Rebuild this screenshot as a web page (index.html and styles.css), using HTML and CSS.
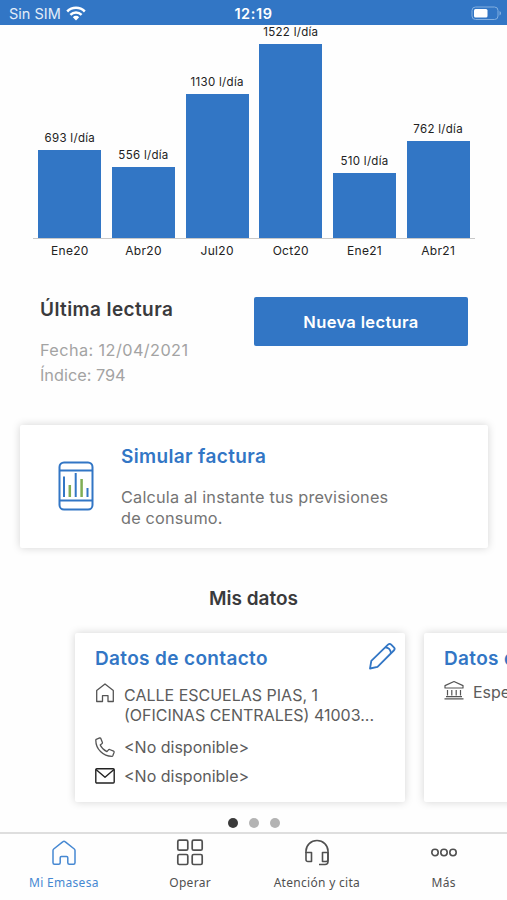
FILE: index.html
```html
<!DOCTYPE html>
<html lang="es">
<head>
    <meta charset="UTF-8">
    <meta name="viewport" content="width=device-width, initial-scale=1.0">
    <title>Mi Emasesa</title>
    <link rel="stylesheet" href="styles.css">
</head>
<body>
    <div class="app">
        <header class="status">
            <div class="carrier">
                <span>Sin SIM</span>
                <svg width="20" height="15" viewBox="0 0 20 15" fill="none" stroke="#fff" stroke-width="2.5">
                    <path d="M1.2 5.5a12.4 12.4 0 0 1 17.6 0"/>
                    <path d="M4.4 8.9a7.9 7.9 0 0 1 11.2 0"/>
                    <path d="M6.8 11.2a4.5 4.5 0 0 1 6.4 0L10 14.4z" fill="#fff" stroke="none"/>
                </svg>
            </div>
            <div class="time">12:19</div>
            <div class="battery">
                <svg width="31" height="15" viewBox="0 0 31 15" fill="none">
                    <rect x="1" y="1" width="26" height="12.5" rx="3.5" stroke="#82afe0"/>
                    <rect x="3" y="3" width="13.5" height="8.5" rx="1.5" fill="#fff"/>
                    <path d="M28.5 5v4.5c2-.8 2-3.7 0-4.5z" fill="#82afe0"/>
                </svg>
            </div>
        </header>

        <main class="content">
            <section class="chart">
                <div class="bars">
                    <div class="col"><span class="value">693 l/día</span><div class="bar" style="height: 88px"></div></div>
                    <div class="col"><span class="value">556 l/día</span><div class="bar" style="height: 71px"></div></div>
                    <div class="col"><span class="value">1130 l/día</span><div class="bar" style="height: 144px"></div></div>
                    <div class="col"><span class="value">1522 l/día</span><div class="bar" style="height: 194px"></div></div>
                    <div class="col"><span class="value">510 l/día</span><div class="bar" style="height: 65px"></div></div>
                    <div class="col"><span class="value">762 l/día</span><div class="bar" style="height: 97px"></div></div>
                </div>
                <div class="months">
                    <span>Ene20</span><span>Abr20</span><span>Jul20</span><span>Oct20</span><span>Ene21</span><span>Abr21</span>
                </div>
            </section>

            <section class="reading">
                <div>
                    <h2 class="reading-title">Última lectura</h2>
                    <p class="reading-text">Fecha: 12/04/2021</p>
                    <p class="reading-text indice">Índice: 794</p>
                </div>
                <button class="btn">Nueva lectura</button>
            </section>

            <section class="simulate">
                <svg width="36" height="50" viewBox="0 0 36 50" fill="none" stroke="#3276c5" stroke-width="2">
                    <rect x="1.5" y="1.5" width="33" height="47" rx="4.5"/>
                    <path d="M1.5 9.5h33M1.5 39.5h33"/>
                    <path d="M6 15.5V36M17.7 12v24M29.5 27v9"/>
                    <path d="M11.8 24v12M23.6 18v18" stroke="#7fad55" stroke-width="2.5"/>
                </svg>
                <div>
                    <h3 class="card-title">Simular factura</h3>
                    <p class="simulate-text">Calcula al instante tus previsiones<br>de consumo.</p>
                </div>
            </section>

            <h2 class="heading">Mis datos</h2>

            <section class="cards">
                <article class="card">
                    <div class="card-head">
                        <h3 class="card-title">Datos de contacto</h3>
                        <svg class="pencil" width="28" height="28" viewBox="0 0 28 28" fill="none" stroke="#3276c5" stroke-width="1.8" stroke-linejoin="round">
                            <path d="M2 26.5l1.3-7.7L20 2.700c1-1 2.300-1 3.200-.1l2.700 2.700c.9.900.9 2.200-.1 3.200L9.500 24.800z"/>
                            <path d="M17.300 5.400c2.800.2 5.200 2.500 5.600 5.600"/>
                        </svg>
                    </div>
                    <div class="row address">
                        <svg width="20" height="20" viewBox="0 0 20 20" fill="none" stroke="#555" stroke-width="1.3" stroke-linejoin="round">
                            <path d="M1.700 7.500L10 1l8.300 6.500v11H13v-5.800H7.500v5.800H1.700z"/>
                        </svg>
                        <p>CALLE ESCUELAS PIAS, 1<br>(OFICINAS CENTRALES) 41003...</p>
                    </div>
                    <div class="row phone">
                        <svg width="20" height="20" viewBox="0 0 20 20" fill="none" stroke="#555" stroke-width="1.3" stroke-linejoin="round">
                            <path d="M1.200 2.300L4.700.9c.5-.1.900.1 1.100.5l1.600 4c.2.400 0 .8-.3 1.100L5.200 8c1.400 3 3.600 5.200 6.700 6.700l1.600-1.900c.3-.3.700-.4 1.100-.3l4 1.600c.4.200.6.600.5 1.100l-1.300 3.500c-.2.500-.5.600-.9.600C8 19.200.8 12 .8 3.200c0-.4.100-.7.400-.9z"/>
                        </svg>
                        <p>&lt;No disponible&gt;</p>
                    </div>
                    <div class="row mail">
                        <svg width="20" height="16" viewBox="0 0 20 16" fill="none" stroke="#222" stroke-width="1.4" stroke-linejoin="round">
                            <rect x=".8" y=".8" width="18.4" height="14.2" rx="1"/>
                            <path d="M1 1.500l9 7.700 9-7.700"/>
                        </svg>
                        <p>&lt;No disponible&gt;</p>
                    </div>
                </article>
                <article class="card">
                    <div class="card-head">
                        <h3 class="card-title">Datos de pago</h3>
                    </div>
                    <div class="row bank">
                        <svg width="20" height="20" viewBox="0 0 20 20" fill="none" stroke="#555" stroke-width="1.2" stroke-linejoin="round">
                            <path d="M1 8V5.600L10 1.500l9 4.100V8z"/>
                            <path d="M3.500 10v5.500M7.800 10v5.500M12.200 10v5.500M16.500 10v5.500M2 16.700h16M.5 18.800h19"/>
                        </svg>
                        <p>Especial</p>
                    </div>
                </article>
            </section>

            <div class="dots"><i class="dot active"></i><i class="dot"></i><i class="dot"></i></div>
        </main>

        <nav class="tabs">
            <a class="tab active">
                <svg width="28" height="28" viewBox="0 0 28 28" fill="none" stroke="currentColor" stroke-width="1.5" stroke-linejoin="round">
                    <path d="M3 11.500c0-.7.200-1.100.700-1.500l9.300-7.400c.6-.5 1.400-.5 2 0l9.300 7.400c.5.400.7.800.7 1.500v12.300c0 1-.5 1.500-1.500 1.500h-4.200c-1 0-1.500-.5-1.500-1.500v-5c0-.8-.4-1.200-1.200-1.200h-5.200c-.8 0-1.200.4-1.200 1.200v5c0 1-.5 1.500-1.500 1.500H4.500c-1 0-1.500-.5-1.500-1.500z"/>
                </svg>
                <span>Mi Emasesa</span>
            </a>
            <a class="tab">
                <svg width="28" height="28" viewBox="0 0 28 28" fill="none" stroke="currentColor" stroke-width="1.7">
                    <rect x="1.8" y="1.2" width="10" height="10" rx="1.5"/>
                    <rect x="16.2" y="1.2" width="10" height="10" rx="1.5"/>
                    <rect x="1.8" y="15.5" width="10" height="10" rx="1.5"/>
                    <rect x="16.2" y="15.5" width="10" height="10" rx="1.5"/>
                </svg>
                <span>Operar</span>
            </a>
            <a class="tab">
                <svg width="28" height="28" viewBox="0 0 28 28" fill="none" stroke="currentColor" stroke-width="1.6" stroke-linejoin="round">
                    <path d="M3 14v-2a11 10.500 0 0 1 22 0v10.500c0 2-1 3-3 3h-6"/>
                    <path d="M3 13.500h5.500v9H5c-1.300 0-2-.7-2-2zM25 13.500h-5.500v9H23c1.300 0 2-.7 2-2z"/>
                </svg>
                <span>Atención y cita</span>
            </a>
            <a class="tab">
                <svg width="28" height="28" viewBox="0 0 28 28" fill="none" stroke="currentColor" stroke-width="1.6">
                    <circle cx="5" cy="13.5" r="3.2"/>
                    <circle cx="14" cy="13.5" r="3.2"/>
                    <circle cx="23" cy="13.5" r="3.2"/>
                </svg>
                <span>Más</span>
            </a>
        </nav>
    </div>
</body>
</html>
```
FILE: styles.css
```css
* {
    margin: 0;
    padding: 0;
    box-sizing: border-box;
}

body {
    font-family: Inter, sans-serif;
    background: #fefefe;
    color: #3a3a3c;
    overflow: hidden;
}

svg {
    display: block;
    flex: none;
}

.app {
    width: 507px;
    height: 900px;
    display: flex;
    flex-direction: column;
    overflow: hidden;
}

.status {
    height: 25px;
    flex: none;
    display: grid;
    grid-template-columns: 1fr auto 1fr;
    align-items: center;
    padding: 2px 5px 0 5px;
    background: #3276c5;
    color: #fff;
    font-size: 14.5px;
}

.carrier {
    display: flex;
    align-items: center;
    gap: 5px;
    padding-left: 4px;
    color: #e2edf8;
}

.time {
    font-weight: 600;
    letter-spacing: 0.6px;
}

.battery {
    justify-self: end;
}

.content {
    flex: 1;
    min-height: 0;
    overflow: hidden;
}

/* Consumption chart */
.chart {
    width: 442px;
    margin-left: 33px;
    font-size: 11.5px;
    color: #222;
}

.bars {
    height: 214px;
    display: grid;
    grid-template-columns: repeat(6, 1fr);
    align-items: end;
    border-bottom: 1px solid #c8c8c8;
}

.col {
    display: flex;
    flex-direction: column;
    align-items: center;
}

.value {
    line-height: 14px;
    margin-bottom: 5px;
    white-space: nowrap;
    letter-spacing: 0.3px;
}

.bar {
    width: 63px;
    background: #3276c5;
}

.months {
    display: grid;
    grid-template-columns: repeat(6, 1fr);
    margin-top: 5px;
    line-height: 14px;
    font-size: 12px;
    letter-spacing: 0.3px;
    text-align: center;
}

/* Last reading */
.reading {
    display: flex;
    justify-content: space-between;
    align-items: flex-start;
    padding: 39px 39px 0 40px;
}

.reading-title {
    font-size: 19px;
    font-weight: 600;
    line-height: 26px;
    letter-spacing: 0.4px;
    margin-bottom: 15px;
}

.reading-text {
    font-size: 16.3px;
    line-height: 25px;
    color: #a3a3a3;
    letter-spacing: 0.4px;
}

.indice {
    letter-spacing: 0;
}

.btn {
    width: 214px;
    height: 49px;
    border: none;
    border-radius: 2px;
    background: #3276c5;
    color: #fff;
    font-family: inherit;
    font-size: 16.5px;
    font-weight: 600;
    letter-spacing: 0.35px;
}

/* Bill simulator */
.simulate {
    display: flex;
    width: 468px;
    height: 123px;
    margin: 37px 0 0 20px;
    padding: 19px 0 0 38px;
    gap: 27px;
    background: #fff;
    border-radius: 2px;
    box-shadow: 0 0 9px rgba(0, 0, 0, 0.17);
}

.simulate svg {
    margin-top: 17px;
}

.card-title {
    font-size: 19px;
    font-weight: 600;
    line-height: 26px;
    color: #3276c5;
    letter-spacing: 0.35px;
    white-space: nowrap;
}

.simulate-text {
    margin-top: 17px;
    font-size: 16.3px;
    line-height: 21px;
    color: #747474;
    letter-spacing: 0.18px;
}

.heading {
    margin-top: 39px;
    font-size: 19px;
    font-weight: 600;
    line-height: 24px;
    text-align: center;
}

/* Contact cards */
.cards {
    display: flex;
    gap: 19px;
    margin: 22px 0 0 75px;
}

.card {
    flex: none;
    width: 330px;
    height: 169px;
    padding: 13px 9px 0 20px;
    background: #fff;
    border-radius: 2px;
    box-shadow: 0 0 9px rgba(0, 0, 0, 0.17);
}

.card-head {
    display: flex;
    justify-content: space-between;
    height: 26px;
}

.pencil {
    margin-top: -4px;
}

.row {
    display: flex;
    gap: 9px;
    font-size: 16px;
    line-height: 20px;
    color: #5c5c5c;
    white-space: nowrap;
}

.address {
    margin-top: 13px;
}

.address svg,
.bank svg {
    margin-top: -2px;
}

.phone {
    margin-top: 12px;
}

.mail {
    margin-top: 9px;
}

.mail svg {
    margin-top: 2px;
}

.bank {
    margin-top: 10px;
}

.dots {
    display: flex;
    justify-content: center;
    gap: 11px;
    margin-top: 16px;
}

.dot {
    width: 10px;
    height: 10px;
    border-radius: 50%;
    background: #b3b3b3;
}

.dot.active {
    background: #3a3a3a;
}

/* Bottom navigation */
.tabs {
    flex: none;
    height: 68px;
    display: grid;
    grid-template-columns: repeat(4, 1fr);
    border-top: 2px solid #dedede;
    background: #fefefe;
}

.tab {
    display: flex;
    flex-direction: column;
    align-items: center;
    padding-top: 5px;
    gap: 7px;
    color: #505050;
    font-family: "Noto Sans", sans-serif;
    font-size: 12px;
    line-height: 17px;
    letter-spacing: 0.3px;
}

.tab.active {
    padding-left: 1px;
    color: #4688d2;
}
```
